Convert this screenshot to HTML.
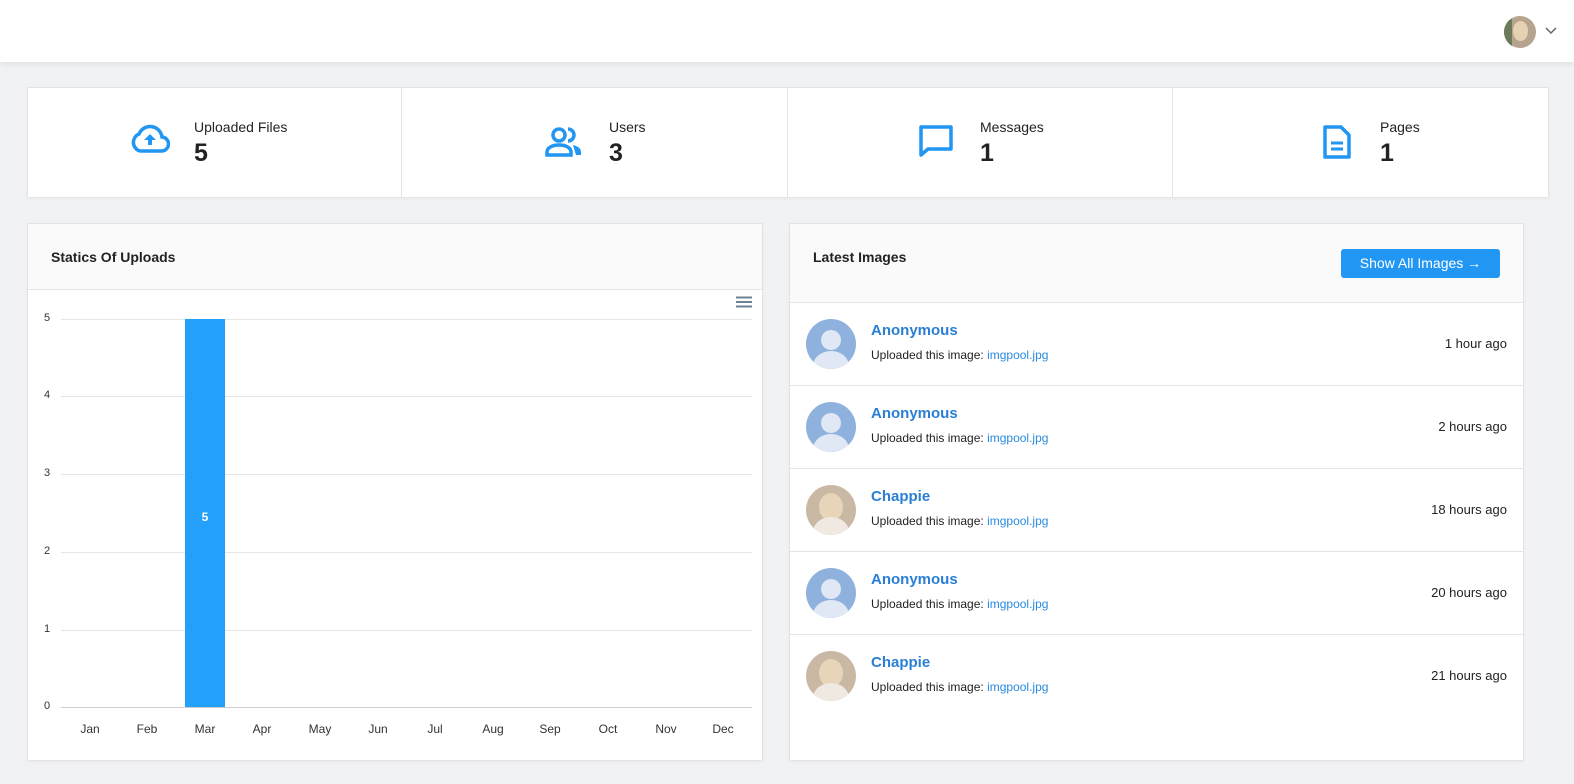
<!DOCTYPE html>
<html><head><meta charset="utf-8"><style>
*{box-sizing:border-box;margin:0;padding:0}
html{overflow:hidden;width:1574px;height:784px}
body{width:1574px;height:784px;background:#f1f2f4;font-family:"Liberation Sans",sans-serif;color:#222;position:relative;overflow:hidden}
.hdr{position:absolute;left:0;top:0;width:1574px;height:62px;background:#fff;box-shadow:0 2px 6px rgba(0,0,0,.08)}
.card{position:absolute;background:#fff;border:1px solid #e3e4e6;box-shadow:0 1px 3px rgba(0,0,0,.04)}
.stat{position:absolute;top:0;height:110px;border-right:1px solid #e3e4e6}
.stat svg{position:absolute;top:36px}
.stat .t{position:absolute;top:31px;font-size:14px;color:#222}
.stat .n{position:absolute;top:51px;font-size:25px;font-weight:bold;color:#222}
.ch{position:absolute;left:0;top:0;right:0;background:#fafafa;border-bottom:1px solid #e3e4e6}
.ttl{position:absolute;font-size:14px;font-weight:bold;color:#222}
.yl{position:absolute;left:16px;font-size:11px;color:#333}
.gl{position:absolute;left:33px;width:691px;height:1px;background:#e6e6e6}
.ml{position:absolute;top:498px;font-size:12px;color:#333;width:40px;text-align:center}
.row{position:absolute;left:0;width:733px;height:83px;border-bottom:1px solid #e3e4e6}
.av{position:absolute;left:16px;top:16px;width:50px;height:50px;border-radius:50%;background:#8fb1dd;overflow:hidden}
.av .h{position:absolute;left:15px;top:11px;width:20px;height:20px;border-radius:50%;background:#dfe8f4}
.av .b{position:absolute;left:7px;top:32px;width:36px;height:30px;border-radius:50% 50% 0 0;background:#dfe8f4}
.av.p{background:#c9b9a4}
.av.p .h{background:#e8d4b8;left:13px;top:8px;width:24px;height:28px}
.av.p .b{background:#efe9e2}
.nm{position:absolute;left:81px;top:19px;font-size:15px;font-weight:bold;color:#2a7fd4}
.sb{position:absolute;left:81px;top:45px;font-size:12px;color:#222}
.sb span{color:#2a8be0}
.tm{position:absolute;right:16px;top:33px;font-size:13px;color:#222}
</style></head><body>
<div class="hdr">
 <div style="position:absolute;left:1504px;top:16px;width:32px;height:32px;border-radius:50%;background:#b7a48e;overflow:hidden"><div style="position:absolute;left:9px;top:5px;width:15px;height:20px;border-radius:50%;background:#e6d1b3"></div><div style="position:absolute;left:0;top:0;width:8px;height:32px;background:#6b7a58"></div></div>
 <svg style="position:absolute;left:1545px;top:27px" width="12" height="8" viewBox="0 0 12 8"><path d="M1 1l5 5 5-5" fill="none" stroke="#666" stroke-width="1.5"/></svg>
</div>
<div class="card" style="left:27px;top:87px;width:1522px;height:111px">
 <div class="stat" style="left:0;width:374px">
  <svg style="left:102px" width="40" height="30" viewBox="0 0 40 30"><path d="M10 27h21a7 7 0 0 0 1-14 12 12 0 0 0-23-3A9 9 0 0 0 10 27z" fill="none" stroke="#2196f3" stroke-width="3.5"/><path d="M20 10l-6 6h4v5h4v-5h4z" fill="#2196f3"/></svg>
  <div class="t" style="left:166px">Uploaded Files</div><div class="n" style="left:166px">5</div></div>
 <div class="stat" style="left:374px;width:386px">
  <svg style="left:143px;top:39px" width="38" height="30" viewBox="0 0 38 30"><circle cx="14" cy="8" r="6" fill="none" stroke="#2196f3" stroke-width="3.5"/><path d="M2 28v-3c0-4 5-7 12-7s12 3 12 7v3z" fill="none" stroke="#2196f3" stroke-width="3.5"/><path d="M23 2a6 6 0 0 1 0 12" fill="none" stroke="#2196f3" stroke-width="3.5"/><path d="M28 18c4 1 8 3 8 7v3h-5" fill="#2196f3"/></svg>
  <div class="t" style="left:207px">Users</div><div class="n" style="left:207px">3</div></div>
 <div class="stat" style="left:760px;width:385px">
  <svg style="left:130px;top:36px" width="36" height="34" viewBox="0 0 36 34"><path d="M3 3h30v22H10l-7 6z" fill="none" stroke="#2196f3" stroke-width="3.5" stroke-linejoin="round"/></svg>
  <div class="t" style="left:192px">Messages</div><div class="n" style="left:192px">1</div></div>
 <div class="stat" style="left:1145px;width:377px;border:none">
  <svg style="left:149px;top:36px" width="30" height="36" viewBox="0 0 30 36"><path d="M3 3h16l8 8v22H3z" fill="none" stroke="#2196f3" stroke-width="3.5" stroke-linejoin="round"/><path d="M9 19h12M9 25h12" stroke="#2196f3" stroke-width="3"/></svg>
  <div class="t" style="left:207px">Pages</div><div class="n" style="left:207px">1</div></div>
</div>
<div class="card" style="left:27px;top:223px;width:736px;height:538px">
 <div class="ch" style="height:66px"></div>
 <div class="ttl" style="left:23px;top:25px">Statics Of Uploads</div>
 <svg style="position:absolute;left:708px;top:72px" width="16" height="12" viewBox="0 0 16 12"><path d="M0 1.5h16M0 6h16M0 10.5h16" stroke="#6e8192" stroke-width="2"/></svg>
 <div class="gl" style="top:95px"></div><div class="gl" style="top:172px"></div><div class="gl" style="top:250px"></div><div class="gl" style="top:328px"></div><div class="gl" style="top:406px"></div><div class="gl" style="top:483px;background:#ccc"></div>
 <div class="yl" style="top:88px">5</div><div class="yl" style="top:165px">4</div><div class="yl" style="top:243px">3</div><div class="yl" style="top:321px">2</div><div class="yl" style="top:399px">1</div><div class="yl" style="top:476px">0</div>
 <div style="position:absolute;left:157px;top:95px;width:40px;height:388px;background:#23a0fb"></div>
 <div style="position:absolute;left:157px;top:286px;width:40px;text-align:center;color:#fff;font-size:12px;font-weight:bold">5</div>
 <div class="ml" style="left:42px">Jan</div><div class="ml" style="left:99px">Feb</div><div class="ml" style="left:157px">Mar</div><div class="ml" style="left:214px">Apr</div><div class="ml" style="left:272px">May</div><div class="ml" style="left:330px">Jun</div><div class="ml" style="left:387px">Jul</div><div class="ml" style="left:445px">Aug</div><div class="ml" style="left:502px">Sep</div><div class="ml" style="left:560px">Oct</div><div class="ml" style="left:618px">Nov</div><div class="ml" style="left:675px">Dec</div>
</div>
<div class="card" style="left:789px;top:223px;width:735px;height:538px">
 <div class="ch" style="height:79px"></div>
 <div class="ttl" style="left:23px;top:25px">Latest Images</div>
 <div style="position:absolute;left:551px;top:25px;width:159px;height:29px;background:#2196f3;border-radius:3px;color:#fff;font-size:14px;text-align:center;line-height:29px">Show All Images →</div>
 <div class="row" style="top:79px"><div class="av"><div class="h"></div><div class="b"></div></div><div class="nm">Anonymous</div><div class="sb">Uploaded this image: <span>imgpool.jpg</span></div><div class="tm">1 hour ago</div></div>
 <div class="row" style="top:162px"><div class="av"><div class="h"></div><div class="b"></div></div><div class="nm">Anonymous</div><div class="sb">Uploaded this image: <span>imgpool.jpg</span></div><div class="tm">2 hours ago</div></div>
 <div class="row" style="top:245px"><div class="av p"><div class="h"></div><div class="b"></div></div><div class="nm">Chappie</div><div class="sb">Uploaded this image: <span>imgpool.jpg</span></div><div class="tm">18 hours ago</div></div>
 <div class="row" style="top:328px"><div class="av"><div class="h"></div><div class="b"></div></div><div class="nm">Anonymous</div><div class="sb">Uploaded this image: <span>imgpool.jpg</span></div><div class="tm">20 hours ago</div></div>
 <div class="row" style="top:411px;border:none"><div class="av p"><div class="h"></div><div class="b"></div></div><div class="nm">Chappie</div><div class="sb">Uploaded this image: <span>imgpool.jpg</span></div><div class="tm">21 hours ago</div></div>
</div>
</body></html>
